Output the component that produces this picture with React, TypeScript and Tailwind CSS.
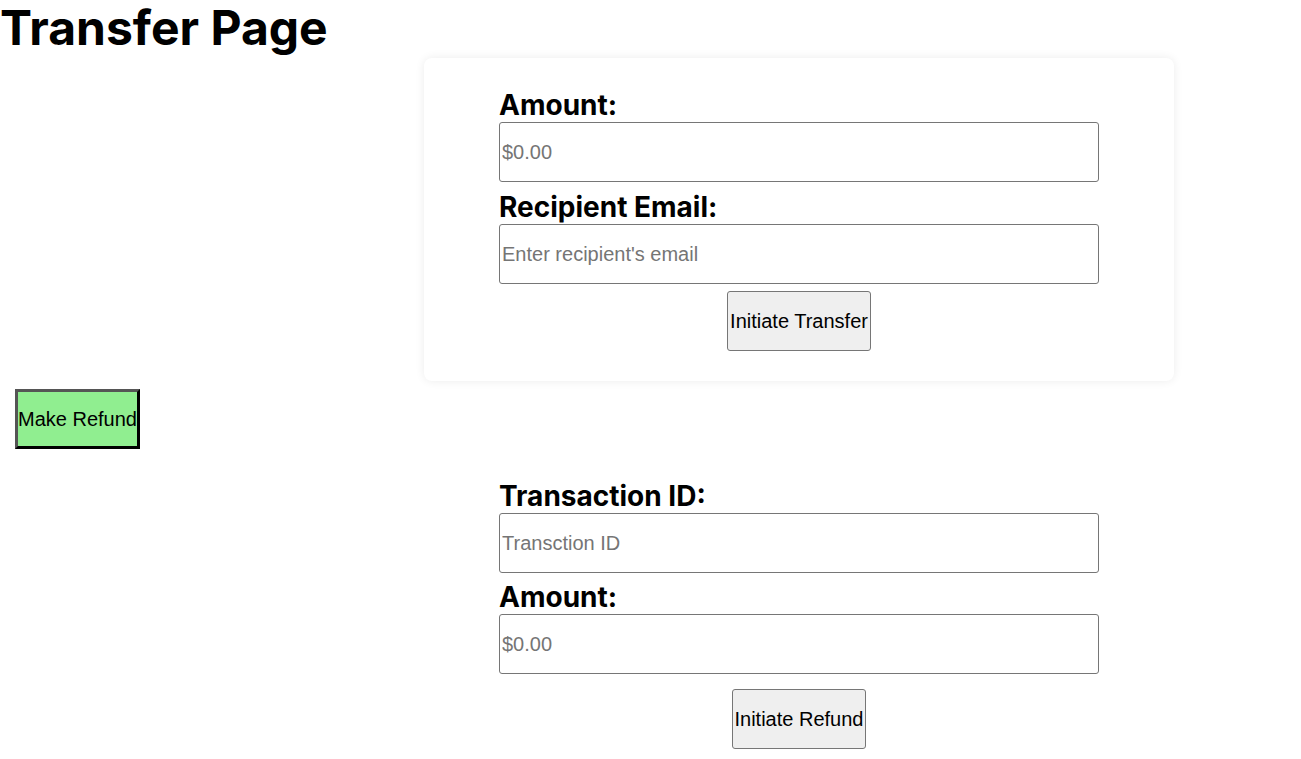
import React from "react";

const labelCls = "block font-bold text-[28px] leading-[34px] text-black";
const inputCls =
  "block w-[600px] h-[60px] border border-[#767676] rounded-[3px] px-[2px] text-[20px] text-black placeholder:text-[#757575] bg-white outline-none";
const btnCls =
  "h-[60px] px-[2px] border border-[#767676] rounded-[3px] bg-[#efefef] text-[20px] text-black";
const sans = { fontFamily: "'Liberation Sans', Arial, sans-serif" };

export default function App() {
  return (
    <div className="min-h-screen bg-white text-black" style={{ fontFamily: "Inter, 'Liberation Sans', sans-serif" }}>
      <h1 className="m-0 font-bold text-[48px] leading-[52px] pt-[2px] h-[58px]">Transfer Page</h1>
      <div className="ml-[424px] w-[750px] rounded-[8px] bg-white shadow-[0_0_10px_rgba(0,0,0,0.08)] px-[75px] py-[30px] flex flex-col">
        <label className={labelCls}>Amount:</label>
        <input className={inputCls} style={sans} placeholder="$0.00" />
        <label className={labelCls + " mt-[8px]"}>Recipient Email:</label>
        <input className={inputCls} style={sans} placeholder="Enter recipient's email" />
        <div className="flex justify-center mt-[7px]">
          <button className={btnCls} style={sans}>Initiate Transfer</button>
        </div>
      </div>
      <button
        className="ml-[15px] mt-[8px] h-[60px] px-0 bg-[#90ee90] border-[3px] border-t-[#555555] border-l-[#555555] border-r-black border-b-black text-[20px] text-black"
        style={sans}
      >
        Make Refund
      </button>
      <div className="ml-[424px] w-[750px] px-[75px] pt-[30px] flex flex-col">
        <label className={labelCls}>Transaction ID:</label>
        <input className={inputCls} style={sans} placeholder="Transction ID" />
        <label className={labelCls + " mt-[7px]"}>Amount:</label>
        <input className={inputCls} style={sans} placeholder="$0.00" />
        <div className="flex justify-center mt-[15px]">
          <button className={btnCls} style={sans}>Initiate Refund</button>
        </div>
      </div>
    </div>
  );
}
